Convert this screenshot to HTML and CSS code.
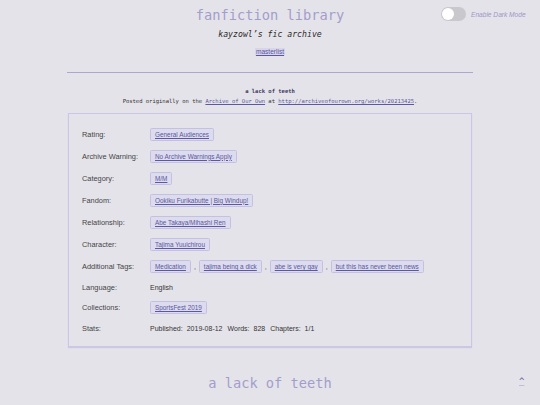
FILE: index.html
```html
<!DOCTYPE html>
<html>
<head>
<meta charset="utf-8">
<link rel="stylesheet" href="styles.css">
</head>
<body>
<div class="toggle">
  <span class="track"><span class="knob"></span></span>
  <span class="toggle-label">Enable Dark Mode</span>
</div>
<header class="site-header">
  <h1 class="site-title">fanfiction library</h1>
  <p class="site-sub">kayzowl’s fic archive</p>
  <nav class="nav"><a class="nav-link" href="#">masterlist</a></nav>
</header>
<main class="main">
  <hr class="rule">
  <p class="work-title">a lack of teeth</p>
  <p class="posted">Posted originally on the <a href="#">Archive of Our Own</a> at <a href="#">http://archiveofourown.org/works/20213425</a>.</p>
  <section class="meta">
    <div class="row"><span class="label">Rating:</span><span class="value"><a class="tag" href="#">General Audiences</a></span></div>
    <div class="row"><span class="label">Archive Warning:</span><span class="value"><a class="tag" href="#">No Archive Warnings Apply</a></span></div>
    <div class="row"><span class="label">Category:</span><span class="value"><a class="tag" href="#">M/M</a></span></div>
    <div class="row"><span class="label">Fandom:</span><span class="value"><a class="tag" href="#">Ookiku Furikabutte | Big Windup!</a></span></div>
    <div class="row"><span class="label">Relationship:</span><span class="value"><a class="tag" href="#">Abe Takaya/Mihashi Ren</a></span></div>
    <div class="row"><span class="label">Character:</span><span class="value"><a class="tag" href="#">Tajima Yuuichirou</a></span></div>
    <div class="row"><span class="label">Additional Tags:</span><span class="value"><a class="tag" href="#">Medication</a><span class="comma">,</span><a class="tag" href="#">tajima being a dick</a><span class="comma">,</span><a class="tag" href="#">abe is very gay</a><span class="comma">,</span><a class="tag" href="#">but this has never been news</a></span></div>
    <div class="row plain"><span class="label">Language:</span><span class="value">English</span></div>
    <div class="row"><span class="label">Collections:</span><span class="value"><a class="tag" href="#">SportsFest 2019</a></span></div>
    <div class="row plain"><span class="label">Stats:</span><span class="value stats"><span>Published:</span><span>2019-08-12</span><span class="sp">Words:</span><span>828</span><span class="sp">Chapters:</span><span>1/1</span></span></div>
  </section>
</main>
<footer class="footer">
  <span class="footer-title">a lack of teeth</span>
  <a class="top" href="#">^</a>
</footer>
</body>
</html>
```
FILE: styles.css
```css
html, body {
  margin: 0;
  padding: 0;
}
body {
  background: #e5e3ea;
  width: 540px;
  height: 405px;
  overflow: hidden;
  position: relative;
  font-family: "Liberation Sans", Arial, sans-serif;
  color: #333;
}
.toggle {
  position: absolute;
  top: 7px;
  left: 441px;
  display: flex;
  align-items: center;
  gap: 5px;
}
.track {
  width: 25px;
  height: 14px;
  border-radius: 7px;
  background: #c9c8cd;
  display: flex;
  align-items: center;
  padding-left: 1px;
  box-sizing: border-box;
}
.knob {
  width: 12px;
  height: 12px;
  border-radius: 50%;
  background: #fff;
}
.toggle-label {
  font-size: 6.6px;
  font-style: italic;
  color: #9b97c6;
}
.site-header {
  text-align: center;
  padding-top: 7px;
}
.site-title {
  margin: 0;
  font-family: "DejaVu Sans Mono", monospace;
  font-weight: normal;
  font-size: 13.7px;
  line-height: 16px;
  color: #a29ecb;
}
.site-sub {
  margin: 6px 0 0;
  font-family: "DejaVu Sans Mono", monospace;
  font-style: italic;
  font-size: 8.2px;
  line-height: 10px;
  color: #2a2a2a;
}
.nav {
  margin-top: 5px;
  line-height: 10px;
}
.nav-link {
  font-size: 6.6px;
  color: #5b57a0;
  background: #d8d5ea;
  padding: 0 1px;
}
.main {
  width: 406px;
  margin: 15px auto 0;
}
.rule {
  margin: 0;
  border: 0;
  border-top: 1px solid #aba7d2;
  height: 0;
}
.work-title {
  margin: 14px 0 0;
  text-align: center;
  font-family: "DejaVu Sans Mono", monospace;
  font-weight: bold;
  font-size: 5.5px;
  line-height: 8px;
  color: #3a3760;
}
.posted {
  margin: 2px 0 0;
  text-align: center;
  font-family: "DejaVu Sans Mono", monospace;
  font-size: 5.5px;
  line-height: 8px;
  color: #333;
}
.posted a {
  color: #5b57a0;
}
.meta {
  margin: 8px 1px 0;
  border: 1px solid #cac6e8;
  box-shadow: 0 1px 1px rgba(150, 140, 210, 0.3);
  padding: 14px 13px 13px 13px;
  display: flex;
  flex-direction: column;
  gap: 10.1px;
}
.row {
  display: flex;
  align-items: center;
  height: 12px;
  font-size: 7px;
}
.row.plain {
  height: 9px;
}
.label {
  width: 68px;
  flex: none;
  color: #444;
  font-size: 7.4px;
}
.value {
  display: flex;
  align-items: center;
  color: #333;
}
.tag {
  display: inline-block;
  border: 1px solid #c4c0e2;
  background: #dddbee;
  color: #5b57a0;
  border-radius: 1.5px;
  padding: 1px 4px 0;
  line-height: 10px;
  font-size: 6.4px;
}
.comma {
  margin: 0 3px 0 3px;
  color: #555;
}
.stats span {
  margin-right: 4px;
}
.stats .sp {
  margin-left: 1px;
}
.footer {
  position: absolute;
  left: 0;
  right: 0;
  top: 374px;
  text-align: center;
}
.footer-title {
  font-family: "DejaVu Sans Mono", monospace;
  font-size: 13.7px;
  line-height: 16px;
  color: #a29ecb;
}
.top {
  position: absolute;
  left: 519px;
  top: 1px;
  font-family: "DejaVu Sans Mono", monospace;
  font-size: 9px;
  line-height: 12px;
  color: #5b57a0;
  text-decoration: underline;
  text-decoration-color: #c0bdd8;
}
```
